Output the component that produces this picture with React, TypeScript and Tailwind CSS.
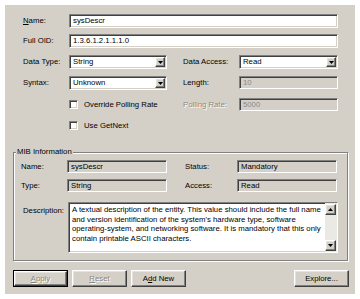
import type { ReactNode } from "react";

const sunken =
  "border border-t-[#808080] border-l-[#808080] border-b-white border-r-white shadow-[inset_1px_1px_0_#404040,inset_-1px_-1px_0_#d4d0c8]";
const raised =
  "border border-t-white border-l-white border-b-[#404040] border-r-[#404040] shadow-[inset_-1px_-1px_0_#808080,inset_1px_1px_0_#e4e2dc]";
const dim = "text-[#8a8884] [text-shadow:1px_1px_0_#ffffff]";

function Field({
  value,
  tone = "white",
  className = "",
}: {
  value?: string;
  tone?: "white" | "gray" | "disabled";
  className?: string;
}) {
  const bg = tone === "white" ? "bg-white" : "bg-[#d4d0c8]";
  const text = tone === "disabled" ? "text-[#8a8884]" : "text-black";
  return (
    <div className={`flex items-center pl-[3px] ${sunken} ${bg} ${text} ${className}`}>
      {value}
    </div>
  );
}

function Arrow({ up = false }: { up?: boolean }) {
  return (
    <svg width="5" height="3" viewBox="0 0 5 3" className={up ? "rotate-180" : ""}>
      <path d="M0 0h5L2.5 3z" fill="#000" />
    </svg>
  );
}

function Select({ value, className = "" }: { value: string; className?: string }) {
  return (
    <div className={`flex items-center justify-between bg-white p-[1px] pl-[3px] ${sunken} ${className}`}>
      <span>{value}</span>
      <div className={`flex h-full w-[10px] items-center justify-center bg-[#d4d0c8] ${raised}`}>
        <Arrow />
      </div>
    </div>
  );
}

function Label({ children, disabled, className = "" }: { children: ReactNode; disabled?: boolean; className?: string }) {
  return <div className={`flex items-center ${disabled ? dim : ""} ${className}`}>{children}</div>;
}

function Check({ label }: { label: string }) {
  return (
    <div className="flex items-center gap-[6px]">
      <div className={`size-[9px] bg-white ${sunken}`} />
      <span>{label}</span>
    </div>
  );
}

function Button({
  children,
  disabled,
  isDefault,
}: {
  children: ReactNode;
  disabled?: boolean;
  isDefault?: boolean;
}) {
  const inner = (
    <div
      className={`flex h-full w-full items-center justify-center bg-[#d4d0c8] ${raised} ${disabled ? dim : ""}`}
    >
      {children}
    </div>
  );
  return isDefault ? (
    <div className="h-[17px] w-[55px] border border-black">{inner}</div>
  ) : (
    <div className="h-[17px] w-[55px]">{inner}</div>
  );
}

export default function App() {
  return (
    <div className="h-[299px] w-[360px] bg-white p-[5px] font-['Liberation_Sans',Arial,sans-serif] text-[7.75px] leading-none text-black">
      <div className="h-[289px] w-[350px] bg-[#d4d0c8]">
        <div className="grid grid-cols-[46px_98px_16px_56px_99px] pl-[18px] pt-[9px]">
          <Label className="h-[14px]">
            <span>
              <span className="underline">N</span>ame:
            </span>
          </Label>
          <Field value="sysDescr" className="col-span-4 h-[14px]" />

          <Label className="mt-[6px] h-[14px]">Full OID:</Label>
          <Field value="1.3.6.1.2.1.1.1.0" className="col-span-4 mt-[6px] h-[14px]" />

          <Label className="mt-[7px] h-[14px]">Data Type:</Label>
          <Select value="String" className="mt-[7px] h-[14px]" />
          <div />
          <Label className="mt-[7px] h-[14px]">Data Access:</Label>
          <Select value="Read" className="mt-[7px] h-[14px]" />

          <Label className="mt-[7px] h-[14px]">Syntax:</Label>
          <Select value="Unknown" className="mt-[7px] h-[14px]" />
          <div />
          <Label className="mt-[7px] h-[14px]">Length:</Label>
          <Field value="10" tone="disabled" className="mt-[7px] h-[13px]" />

          <div />
          <div className="col-span-2 mt-[8px] flex h-[13px] items-center">
            <Check label="Override Polling Rate" />
          </div>
          <Label disabled className="mt-[8px] h-[13px]">
            Polling Rate:
          </Label>
          <Field value="5000" tone="disabled" className="mt-[8px] h-[13px]" />

          <div />
          <div className="col-span-4 mt-[8px] flex h-[13px] items-center">
            <Check label="Use GetNext" />
          </div>
        </div>

        <div className="relative ml-[8px] mt-[20px] w-[335px] border border-[#808080] pb-[7px] pl-[7px] pt-[7px] shadow-[1px_1px_0_#ffffff,inset_1px_1px_0_#ffffff]">
          <div className="absolute -top-[5px] left-[2px] bg-[#d4d0c8] px-[1px]">MIB Information</div>
          <div className="grid grid-cols-[46px_100px_18px_52px_100px]">
            <Label className="h-[13px]">Name:</Label>
            <Field value="sysDescr" tone="gray" className="h-[13px]" />
            <div />
            <Label className="h-[13px]">Status:</Label>
            <Field value="Mandatory" tone="gray" className="h-[13px]" />

            <Label className="mt-[6px] h-[13px]">Type:</Label>
            <Field value="String" tone="gray" className="mt-[6px] h-[13px]" />
            <div />
            <Label className="mt-[6px] h-[13px]">Access:</Label>
            <Field value="Read" tone="gray" className="mt-[6px] h-[13px]" />
          </div>
          <div className="mt-[10px] flex">
            <div className="w-[47px] pl-[2px] pt-[5px]">Description:</div>
            <div className={`flex h-[51px] w-[270px] bg-white ${sunken}`}>
              <div className="flex-1 whitespace-nowrap pl-[3px] pt-[2px] leading-[9.5px]">
                <div>A textual description of the entity. This value should include the full name</div>
                <div>and version identification of the system&apos;s hardware type, software</div>
                <div>operating-system, and networking software. It is mandatory that this only</div>
                <div>contain printable ASCII characters.</div>
              </div>
              <div className="flex w-[12px] flex-col justify-between bg-[#ebe9e4] py-[1px] pr-[1px]">
                <div className={`flex h-[11px] items-center justify-center bg-[#d4d0c8] ${raised}`}>
                  <Arrow up />
                </div>
                <div className={`flex h-[11px] items-center justify-center bg-[#d4d0c8] ${raised}`}>
                  <Arrow />
                </div>
              </div>
            </div>
          </div>
        </div>

        <div className="ml-[8px] mt-[9px] flex w-[336px] justify-between">
          <div className="flex gap-[4px]">
            <Button disabled isDefault>
              <span>
                <span className="underline">A</span>pply
              </span>
            </Button>
            <Button disabled>
              <span>
                <span className="underline">R</span>eset
              </span>
            </Button>
            <Button>
              <span>
                A<span className="underline">d</span>d New
              </span>
            </Button>
          </div>
          <Button>Explore...</Button>
        </div>
      </div>
    </div>
  );
}
